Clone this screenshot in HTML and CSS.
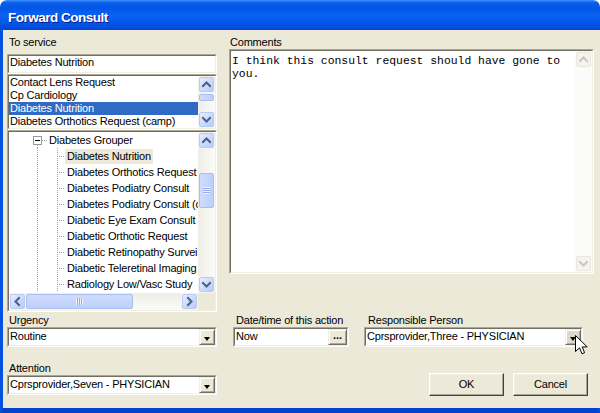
FILE: index.html
```html
<!DOCTYPE html>
<html>
<head>
<meta charset="utf-8">
<title>Forward Consult</title>
<link rel="stylesheet" href="styles.css">
</head>
<body>
<div class="window">
  <div class="titlebar"><span class="title">Forward Consult</span></div>
  <div class="frame">
    <div class="client">
      <div class="top">
        <div class="col-left">
          <div class="label pl2">To service</div>
          <div class="sunken edit service"><div class="sunken-in edit-in"><span class="edit-text">Diabetes Nutrition</span></div></div>
          <div class="sunken listbox"><div class="sunken-in list-in">
            <div class="list-items">
              <div class="li">Contact Lens Request</div>
              <div class="li">Cp Cardiology</div>
              <div class="li sel">Diabetes Nutrition</div>
              <div class="li">Diabetes Orthotics Request (camp)</div>
            </div>
            <div class="vscroll">
              <div class="sb-btn"><div class="sb-face"><svg width="13" height="13" viewBox="0 0 13 13"><polyline points="3,8 6.5,4.5 10,8" /></svg></div></div>
              <div class="sb-track list-track"><div class="sb-thumb vthumb list-thumb"></div></div>
              <div class="sb-btn"><div class="sb-face"><svg width="13" height="13" viewBox="0 0 13 13"><polyline points="3,5 6.5,8.5 10,5" /></svg></div></div>
            </div>
          </div></div>
          <div class="sunken tree"><div class="sunken-in tree-in">
            <div class="tree-items">
              <div class="tr grouper"><span class="sp-g"></span><span class="tbox"><span class="minus"></span></span><span class="hl hl-g"></span><span class="tt">Diabetes Grouper</span></div>
              <div class="tr child"><span class="sp-c"></span><span class="hl hl-c"></span><span class="tt tsel">Diabetes Nutrition</span></div>
              <div class="tr child"><span class="sp-c"></span><span class="hl hl-c"></span><span class="tt">Diabetes Orthotics Request</span></div>
              <div class="tr child"><span class="sp-c"></span><span class="hl hl-c"></span><span class="tt">Diabetes Podiatry Consult</span></div>
              <div class="tr child"><span class="sp-c"></span><span class="hl hl-c"></span><span class="tt">Diabetes Podiatry Consult (c</span></div>
              <div class="tr child"><span class="sp-c"></span><span class="hl hl-c"></span><span class="tt">Diabetic Eye Exam Consult</span></div>
              <div class="tr child"><span class="sp-c"></span><span class="hl hl-c"></span><span class="tt">Diabetic Orthotic Request</span></div>
              <div class="tr child"><span class="sp-c"></span><span class="hl hl-c"></span><span class="tt">Diabetic Retinopathy Survei</span></div>
              <div class="tr child"><span class="sp-c"></span><span class="hl hl-c"></span><span class="tt">Diabetic Teleretinal Imaging</span></div>
              <div class="tr child"><span class="sp-c"></span><span class="hl hl-c"></span><span class="tt">Radiology Low/Vasc Study</span></div>
            </div>
            <div class="vscroll">
              <div class="sb-btn"><div class="sb-face"><svg width="13" height="13" viewBox="0 0 13 13"><polyline points="3,8 6.5,4.5 10,8" /></svg></div></div>
              <div class="sb-track tree-track"><div class="sb-thumb vthumb tree-thumb"><span class="grip-v"></span></div></div>
              <div class="sb-btn"><div class="sb-face"><svg width="13" height="13" viewBox="0 0 13 13"><polyline points="3,5 6.5,8.5 10,5" /></svg></div></div>
            </div>
            <div class="hscroll">
              <div class="sb-btn"><div class="sb-face"><svg width="13" height="13" viewBox="0 0 13 13"><polyline points="8,3 4.5,6.5 8,10" /></svg></div></div>
              <div class="sb-track htrack"><div class="sb-thumb hthumb"><span class="grip-h"></span></div></div>
              <div class="sb-btn"><div class="sb-face"><svg width="13" height="13" viewBox="0 0 13 13"><polyline points="5,3 8.5,6.5 5,10" /></svg></div></div>
            </div>
            <div class="sizebox"></div>
          </div></div>
        </div>
        <div class="col-right">
          <div class="label pl1">Comments</div>
          <div class="sunken memo"><div class="sunken-in memo-in">
            <div class="memo-text">I think this consult request should have gone to<br>you.</div>
            <div class="vscroll disabled">
              <div class="sb-btn"><div class="sb-face"><svg width="13" height="13" viewBox="0 0 13 13"><polyline points="3,8 6.5,4.5 10,8" /></svg></div></div>
              <div class="sb-track memo-track"></div>
              <div class="sb-btn"><div class="sb-face"><svg width="13" height="13" viewBox="0 0 13 13"><polyline points="3,5 6.5,8.5 10,5" /></svg></div></div>
            </div>
          </div></div>
        </div>
      </div>
      <div class="bottom">
        <div class="row1">
          <div class="field f-urgency">
            <div class="label pl2">Urgency</div>
            <div class="sunken combo"><div class="sunken-in combo-in"><span class="ctext">Routine</span><span class="ddbtn"><span class="tri"></span></span></div></div>
          </div>
          <div class="field f-date">
            <div class="label pl3">Date/time of this action</div>
            <div class="sunken combo"><div class="sunken-in combo-in"><span class="ctext">Now</span><span class="dotbtn">...</span></div></div>
          </div>
          <div class="field f-resp">
            <div class="label pl4">Responsible Person</div>
            <div class="sunken combo"><div class="sunken-in combo-in"><span class="ctext">Cprsprovider,Three - PHYSICIAN</span><span class="ddbtn hover"><span class="tri"></span></span></div></div>
          </div>
        </div>
        <div class="row2">
          <div class="field f-attn">
            <div class="label pl2">Attention</div>
            <div class="sunken combo"><div class="sunken-in combo-in"><span class="ctext">Cprsprovider,Seven - PHYSICIAN</span><span class="ddbtn"><span class="tri"></span></span></div></div>
          </div>
          <div class="buttons">
            <div class="btn">OK</div>
            <div class="btn">Cancel</div>
          </div>
        </div>
      </div>
    </div>
  </div>
  <svg class="cursor" width="14" height="22" viewBox="0 0 14 22"><path d="M0.5,0.5 L0.5,16.5 L4.5,12.8 L7,18.8 L9.6,17.7 L7.2,11.9 L12.2,11.9 Z" fill="#fff" stroke="#000" stroke-width="1" stroke-linejoin="miter"/></svg>
</div>
</body>
</html>
```

FILE: styles.css
```css
* { box-sizing: border-box; }
html, body { margin: 0; padding: 0; background: #ffffff; }
body {
  width: 600px; height: 413px; overflow: hidden;
  font-family: "Liberation Sans", Arial, sans-serif;
  font-size: 11px; letter-spacing: -0.2px; color: #000;
}
.window { position: relative; width: 600px; height: 413px; display: flex; flex-direction: column; }
.titlebar {
  height: 30px; flex: none; border-radius: 7px 7px 0 0;
  background: linear-gradient(180deg, #3d8fff 0px, #0b5deb 3px, #0256e6 8px, #0a62f2 15px, #0257e8 23px, #0046d4 30px);
  padding: 10px 0 0 8px;
}
.title {
  color: #fff; font-weight: bold; font-size: 13.5px; letter-spacing: -0.5px;
  line-height: 16px; text-shadow: 1px 1px #0a1a8c; display: block;
}
.frame {
  flex: 1; display: flex;
  border-left: 3px solid #0552e0; border-right: 3px solid #0552e0; border-bottom: 5px solid #0443d0;
}
.client { flex: 1; background: #ece9d8; padding: 6px 3px 0 4px; display: flex; flex-direction: column; }
.top { display: flex; height: 276px; flex: none; }
.col-left { width: 210px; display: flex; flex-direction: column; }
.col-right { width: 365px; margin-left: 12px; display: flex; flex-direction: column; }
.label { height: 13px; line-height: 13px; white-space: nowrap; }
.pl1 { padding-left: 1px; } .pl2 { padding-left: 2px; } .pl3 { padding-left: 3px; } .pl4 { padding-left: 4px; }

.sunken { border: 1px solid; border-color: #aca899 #ffffff #ffffff #aca899; }
.sunken-in { height: 100%; border: 1px solid; border-color: #716f64 #f1efe2 #f1efe2 #716f64; background: #fff; }

.service { height: 20px; margin-top: 5px; }
.edit-in { padding-left: 1px; line-height: 13px; }

.listbox { height: 56px; }
.list-in { display: flex; }
.list-items { flex: 1; overflow: hidden; }
.li { height: 13px; line-height: 13px; padding-left: 1px; white-space: nowrap; }
.li.sel { background: #316ac5; color: #fff; }

.vscroll { width: 17px; display: flex; flex-direction: column; background: #f6f5f0; }
.hscroll { height: 17px; display: flex; background: #f6f5f0; }
.sb-btn { width: 17px; height: 17px; flex: none; padding: 1px; background: #f6f5f0; }
.sb-face {
  width: 15px; height: 15px; border-radius: 2px; border: 1px solid #b8cbf5;
  background: linear-gradient(135deg, #e6eeff 0%, #cddcfd 50%, #b7cbfa 100%);
  display: flex; align-items: center; justify-content: center;
}
.sb-face svg { display: block; }
.sb-face polyline { fill: none; stroke: #4d6185; stroke-width: 2; stroke-linecap: square; }
.sb-track { flex: 1; background: linear-gradient(90deg, #eeede5, #fbfbf8); }
.hscroll .sb-track { background: linear-gradient(180deg, #eeede5, #fbfbf8); }
.sb-thumb {
  border: 1px solid #a9bff0; border-radius: 2px;
  background: linear-gradient(90deg, #cfdcfd, #bccffb);
  display: flex; align-items: center; justify-content: center;
}
.vthumb { width: 15px; margin-left: 1px; }
.list-thumb { height: 7px; margin-top: 1px; }
.tree-thumb { height: 35px; margin-top: 24px; }
.hthumb { height: 15px; margin-top: 1px; width: 107px; background: linear-gradient(180deg, #cfdcfd, #bccffb); }
.grip-v { width: 7px; height: 7px; background: repeating-linear-gradient(180deg, #eef3ff 0 1px, #8faaf0 1px 2px); }
.grip-h { width: 7px; height: 7px; background: repeating-linear-gradient(90deg, #eef3ff 0 1px, #8faaf0 1px 2px); }

.tree { height: 182px; }
.tree-in { display: grid; grid-template-columns: 189px 17px; grid-template-rows: 161px 17px; }
.tree-items { overflow: hidden; }
.tr { height: 16px; display: flex; align-items: center; white-space: nowrap; background-repeat: no-repeat; }
.child {
  background-image:
    repeating-linear-gradient(180deg, #a0a0a0 0 1px, transparent 1px 2px),
    repeating-linear-gradient(180deg, #a0a0a0 0 1px, transparent 1px 2px);
  background-size: 1px 16px, 1px 16px;
  background-position: 28px 0, 48px 0;
}
.grouper {
  background-image: repeating-linear-gradient(180deg, #a0a0a0 0 1px, transparent 1px 2px);
  background-size: 1px 4px; background-position: 28px 13px;
}
.sp-g { width: 24px; flex: none; }
.sp-c { width: 48px; flex: none; }
.tbox {
  width: 9px; height: 9px; flex: none; border: 1px solid #919b9c; background: #fff;
  display: flex; align-items: center; justify-content: center;
}
.minus { width: 5px; height: 1px; background: #000; }
.hl { height: 1px; flex: none; background: repeating-linear-gradient(90deg, #a0a0a0 0 1px, transparent 1px 2px); }
.hl-g { width: 5px; }
.hl-c { width: 8px; }
.tt { height: 15px; line-height: 15px; padding: 0 2px; }
.tsel { background: #ece9d8; }
.sizebox { background: #ece9d8; }

.memo { height: 225px; }
.memo-in { display: flex; }
.memo-text {
  flex: 1; padding: 4px 0 0 1px;
  font-family: "Liberation Mono", "Courier New", monospace; font-size: 11.4px; letter-spacing: 0;
  line-height: 13px; white-space: nowrap;
}
.disabled { background: #fbfbf9; }
.disabled .sb-btn { background: #fbfbf9; }
.disabled .sb-face { background: #f4f3ee; border-color: #e8e6dc; }
.disabled .sb-face polyline { stroke: #c9c7ba; }
.memo-track { background: #fbfbf9; }

.bottom { display: flex; flex-direction: column; margin-top: 2px; }
.row1 { display: flex; }
.row2 { display: flex; margin-top: 15px; }
.f-urgency, .f-attn { width: 210px; }
.f-date { width: 116px; margin-left: 16px; }
.f-resp { width: 219px; margin-left: 15px; }
.combo { height: 20px; }
.combo-in { display: flex; }
.ctext { flex: 1; padding-left: 1px; line-height: 14px; white-space: nowrap; overflow: hidden; }
.ddbtn, .dotbtn {
  flex: none; height: 16px; background: #ece9d8;
  border: 1px solid; border-color: #f1efe2 #716f64 #716f64 #f1efe2;
  box-shadow: inset 1px 1px #ffffff, inset -1px -1px #aca899;
  display: flex; justify-content: center;
}
.ddbtn { width: 16px; align-items: center; }
.ddbtn.hover { background: #dcd9cc; }
.tri { width: 0; height: 0; border-left: 3.5px solid transparent; border-right: 3.5px solid transparent; border-top: 4px solid #000; margin-top: 3px; }
.dotbtn { width: 19px; font-weight: bold; line-height: 11px; letter-spacing: 0; font-size: 11px; }

.buttons { display: flex; margin-left: 212px; margin-top: 11px; }
.btn {
  width: 75px; height: 23px; margin-right: 9px; text-align: center; line-height: 21px;
  background: #ece9d8; border: 1px solid; border-color: #ffffff #404040 #404040 #ffffff;
  box-shadow: inset -1px -1px #aca899, inset 1px 1px #f1efe2;
}
.cursor { position: absolute; left: 575px; top: 335px; }
```
